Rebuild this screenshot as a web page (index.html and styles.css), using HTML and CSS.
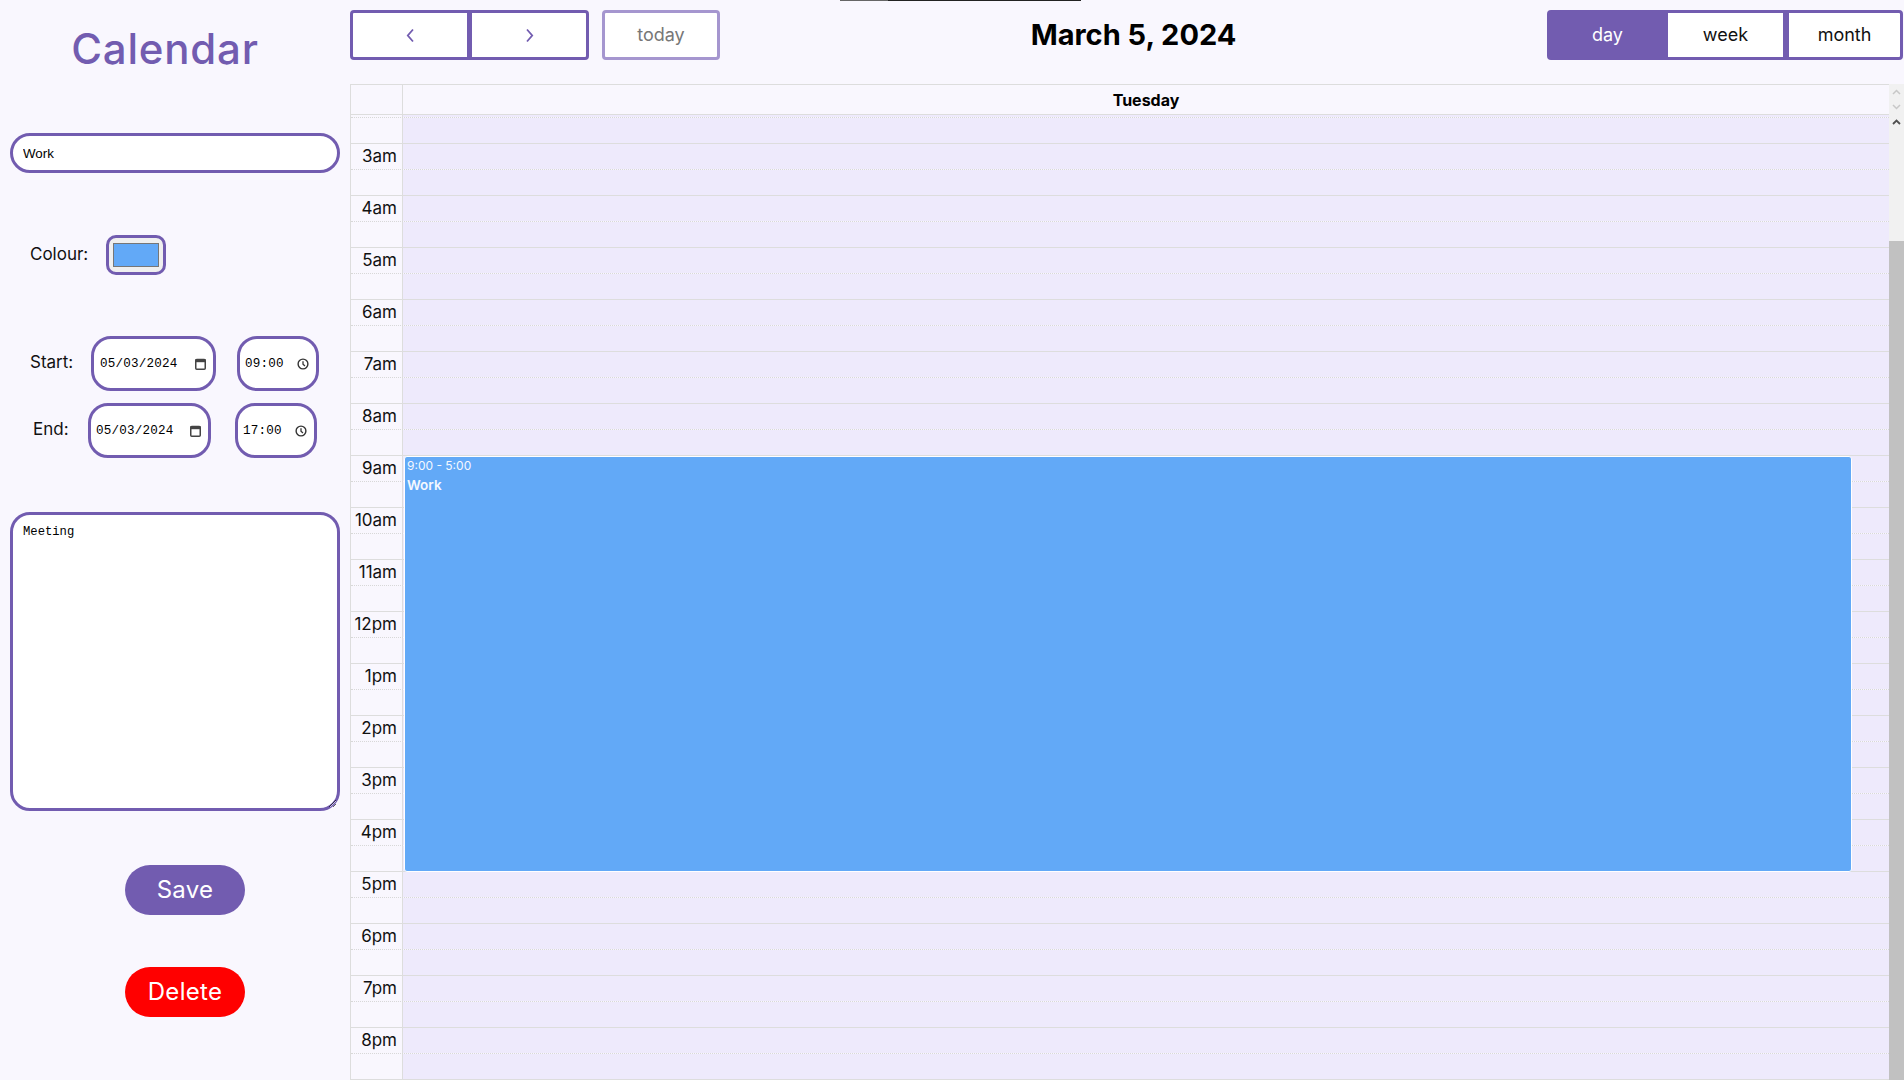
FILE: index.html
```html
<!DOCTYPE html>
<html lang="en">
<head>
<meta charset="utf-8">
<title>Calendar</title>
<link rel="stylesheet" href="styles.css">
</head>
<body>
<div class="topline"></div>
<div class="app">
  <aside class="sidebar">
    <h1 class="brand">Calendar</h1>
    <input class="name-input" type="text" value="Work">
    <div class="colour-row">
      <span class="label colour-label">Colour:</span>
      <div class="colour-box"><div class="swatch"></div></div>
    </div>
    <div class="dt-row start">
      <span class="label">Start:</span>
      <div class="field date"><span>05/03/2024</span>
        <svg class="ico" width="11" height="12" viewBox="0 0 11 12"><rect x="0.75" y="1.5" width="9.5" height="9.75" rx="1" fill="none" stroke="#444" stroke-width="1.5"/><rect x="0.5" y="1" width="10" height="3.2" fill="#444"/></svg>
      </div>
      <div class="field time"><span>09:00</span>
        <svg class="ico" width="12" height="12" viewBox="0 0 12 12"><circle cx="6" cy="6" r="4.9" fill="none" stroke="#333" stroke-width="1.4"/><path d="M6 3.2V6.2L8 8" fill="none" stroke="#333" stroke-width="1.3"/></svg>
      </div>
    </div>
    <div class="dt-row end">
      <span class="label">End:</span>
      <div class="field date"><span>05/03/2024</span>
        <svg class="ico" width="11" height="12" viewBox="0 0 11 12"><rect x="0.75" y="1.5" width="9.5" height="9.75" rx="1" fill="none" stroke="#444" stroke-width="1.5"/><rect x="0.5" y="1" width="10" height="3.2" fill="#444"/></svg>
      </div>
      <div class="field time"><span>17:00</span>
        <svg class="ico" width="12" height="12" viewBox="0 0 12 12"><circle cx="6" cy="6" r="4.9" fill="none" stroke="#333" stroke-width="1.4"/><path d="M6 3.2V6.2L8 8" fill="none" stroke="#333" stroke-width="1.3"/></svg>
      </div>
    </div>
    <textarea class="notes">Meeting</textarea>
    <button class="btn save">Save</button>
    <button class="btn delete">Delete</button>
  </aside>

  <main class="main">
    <div class="toolbar">
      <div class="tb-left">
        <div class="group">
          <button class="nav-btn prev"><svg width="9" height="15" viewBox="0 0 9 15"><path d="M7 1.5L1.8 7.5L7 13.5" fill="none" stroke="#725cb0" stroke-width="1.8"/></svg></button>
          <button class="nav-btn next"><svg width="9" height="15" viewBox="0 0 9 15"><path d="M2 1.5L7.2 7.5L2 13.5" fill="none" stroke="#725cb0" stroke-width="1.8"/></svg></button>
        </div>
        <button class="today">today</button>
      </div>
      <h2 class="title">March 5, 2024</h2>
      <div class="group">
        <button class="view day-btn">day</button>
        <button class="view week-btn">week</button>
        <button class="view month-btn">month</button>
      </div>
    </div>

    <div class="calendar">
      <div class="cal-main">
        <div class="cal-head">
          <div class="head-gutter"></div>
          <div class="head-day">Tuesday</div>
        </div>
        <div class="cal-body">
          <div class="rows">
            <div class="slot"><div class="g"></div><div class="d"></div></div>
            <div class="slot half"><div class="g"></div><div class="d"></div></div>
            <div class="slot"><div class="g">3am</div><div class="d"></div></div>
            <div class="slot half"><div class="g"></div><div class="d"></div></div>
            <div class="slot"><div class="g">4am</div><div class="d"></div></div>
            <div class="slot half"><div class="g"></div><div class="d"></div></div>
            <div class="slot"><div class="g">5am</div><div class="d"></div></div>
            <div class="slot half"><div class="g"></div><div class="d"></div></div>
            <div class="slot"><div class="g">6am</div><div class="d"></div></div>
            <div class="slot half"><div class="g"></div><div class="d"></div></div>
            <div class="slot"><div class="g">7am</div><div class="d"></div></div>
            <div class="slot half"><div class="g"></div><div class="d"></div></div>
            <div class="slot"><div class="g">8am</div><div class="d"></div></div>
            <div class="slot half"><div class="g"></div><div class="d"></div></div>
            <div class="slot"><div class="g">9am</div><div class="d"></div></div>
            <div class="slot half"><div class="g"></div><div class="d"></div></div>
            <div class="slot"><div class="g">10am</div><div class="d"></div></div>
            <div class="slot half"><div class="g"></div><div class="d"></div></div>
            <div class="slot"><div class="g">11am</div><div class="d"></div></div>
            <div class="slot half"><div class="g"></div><div class="d"></div></div>
            <div class="slot"><div class="g">12pm</div><div class="d"></div></div>
            <div class="slot half"><div class="g"></div><div class="d"></div></div>
            <div class="slot"><div class="g">1pm</div><div class="d"></div></div>
            <div class="slot half"><div class="g"></div><div class="d"></div></div>
            <div class="slot"><div class="g">2pm</div><div class="d"></div></div>
            <div class="slot half"><div class="g"></div><div class="d"></div></div>
            <div class="slot"><div class="g">3pm</div><div class="d"></div></div>
            <div class="slot half"><div class="g"></div><div class="d"></div></div>
            <div class="slot"><div class="g">4pm</div><div class="d"></div></div>
            <div class="slot half"><div class="g"></div><div class="d"></div></div>
            <div class="slot"><div class="g">5pm</div><div class="d"></div></div>
            <div class="slot half"><div class="g"></div><div class="d"></div></div>
            <div class="slot"><div class="g">6pm</div><div class="d"></div></div>
            <div class="slot half"><div class="g"></div><div class="d"></div></div>
            <div class="slot"><div class="g">7pm</div><div class="d"></div></div>
            <div class="slot half"><div class="g"></div><div class="d"></div></div>
            <div class="slot"><div class="g">8pm</div><div class="d"></div></div>
            <div class="slot half"><div class="g"></div><div class="d"></div></div>
            <div class="slot"><div class="g"></div><div class="d"></div></div>
            <div class="slot half"><div class="g"></div><div class="d"></div></div>
            <div class="event">
              <div class="ev-time">9:00 - 5:00</div>
              <div class="ev-title">Work</div>
            </div>
          </div>
        </div>
      </div>
      <div class="scrollbar">
        <div class="chevs">
          <svg width="9" height="6" viewBox="0 0 9 6"><path d="M1 5L4.5 1.5L8 5" fill="none" stroke="#c8c8c8" stroke-width="1.5"/></svg>
          <svg width="9" height="6" viewBox="0 0 9 6"><path d="M1 1L4.5 4.5L8 1" fill="none" stroke="#c8c8c8" stroke-width="1.5"/></svg>
          <svg width="9" height="6" viewBox="0 0 9 6"><path d="M1 5L4.5 1.5L8 5" fill="none" stroke="#505050" stroke-width="1.8"/></svg>
        </div>
        <div class="thumb"></div>
      </div>
    </div>
  </main>
</div>
</body>
</html>
```

FILE: styles.css
```css
* { box-sizing: border-box; }
html, body { margin: 0; height: 100%; }
body {
  background: #f9f7fe;
  font-family: Inter, "Open Sans", sans-serif;
  color: #111;
  overflow: hidden;
}
.topline {
  position: absolute;
  top: 0;
  left: 840px;
  width: 241px;
  height: 1px;
  background: linear-gradient(to right, #666 0, #666 48px, #222 48px);
}
.app { display: flex; height: 1080px; }

/* Sidebar */
.sidebar { width: 350px; flex: none; padding: 0 10px; }
.brand {
  margin: 24px 0 0;
  width: 310px;
  height: 50px;
  font-size: 42px;
  line-height: 50px;
  font-weight: 500;
  letter-spacing: 0.8px;
  color: #725cb0;
  text-align: center;
}
.name-input {
  display: block;
  margin-top: 59px;
  width: 330px;
  height: 40px;
  border: 3px solid #725cb0;
  border-radius: 20px;
  background: #fff;
  padding: 0 10px;
  font: 13.33px "Liberation Sans", Arial, sans-serif;
  color: #000;
  outline: none;
}
.label { font-size: 17px; color: #111; padding-bottom: 3px; }
.colour-row { display: flex; align-items: center; margin-top: 62px; height: 40px; }
.colour-label { margin-left: 20px; width: 76px; }
.colour-box {
  width: 60px;
  height: 40px;
  border: 3px solid #725cb0;
  border-radius: 10px;
  background: #efefef;
  display: flex;
  align-items: center;
  justify-content: center;
}
.swatch { width: 46px; height: 24px; background: #62a9f7; border: 1px solid #767676; }

.dt-row { display: flex; align-items: center; height: 55px; }
.start { margin-top: 61px; }
.end { margin-top: 12px; }
.start .label { margin-left: 20px; width: 61px; }
.end .label { margin-left: 23px; width: 55px; }
.field {
  height: 55px;
  border: 3px solid #725cb0;
  border-radius: 20px;
  background: #fff;
  display: flex;
  align-items: center;
  justify-content: space-between;
  font: 12.6px "Liberation Mono", "DejaVu Sans Mono", monospace;
  letter-spacing: 0.2px;
  color: #000;
  padding-top: 1px;
}
.date { width: 125px; padding-left: 6px; padding-right: 7px; }
.end .date { width: 123px; padding-left: 5px; }
.time { width: 82px; margin-left: 21px; padding-left: 5px; padding-right: 7px; }
.end .time { margin-left: 24px; }
.ico { flex: none; }

.notes {
  display: block;
  margin-top: 54px;
  width: 330px;
  height: 299px;
  border: 3px solid #725cb0;
  border-radius: 20px;
  background: #fff;
  padding: 10px;
  font: 12.2px "Liberation Mono", "DejaVu Sans Mono", monospace;
  color: #000;
  outline: none;
}
.btn {
  display: block;
  margin-left: 115px;
  width: 120px;
  height: 50px;
  border: none;
  border-radius: 25px;
  color: #fff;
  font: 400 24px Inter, "Open Sans", sans-serif;
  letter-spacing: 0.3px;
  padding: 0 0 2px;
}
.save { margin-top: 54px; background: #725cb0; }
.delete { margin-top: 52px; background: #ff0000; }

/* Main */
.main { flex: 1; min-width: 0; display: flex; flex-direction: column; }
.toolbar {
  display: flex;
  align-items: center;
  justify-content: space-between;
  height: 50px;
  margin-top: 10px;
  padding-right: 1px;
}
.tb-left { display: flex; align-items: center; }
.group { display: flex; }
button { cursor: pointer; }
.nav-btn {
  width: 120px;
  height: 50px;
  border: 3px solid #725cb0;
  background: #fff;
  display: flex;
  align-items: center;
  justify-content: center;
  padding: 0;
}
.prev { border-radius: 4px 0 0 4px; }
.next { margin-left: -1px; border-radius: 0 4px 4px 0; }
.today {
  margin-left: 13px;
  width: 118px;
  height: 50px;
  border: 3px solid #a596cf;
  border-radius: 4px;
  background: #fff;
  color: #777;
  font: 400 18px Inter, "Open Sans", sans-serif;
  padding: 0 0 2px;
}
.title { margin: 0 0 1px; font-size: 29px; font-weight: 700; color: #000; }
.view {
  height: 50px;
  border: 3px solid #725cb0;
  background: #fff;
  color: #111;
  font: 400 18px Inter, "Open Sans", sans-serif;
  padding: 0 0 2px;
}
.day-btn { width: 121px; background: #725cb0; color: #fff; border-radius: 4px 0 0 4px; }
.week-btn { width: 118px; border-left: 0; }
.month-btn { width: 117px; border-radius: 0 4px 4px 0; }

/* Calendar grid */
.calendar { margin-top: 24px; flex: 1; min-height: 0; display: flex; }
.cal-main { flex: 1; min-width: 0; display: flex; flex-direction: column; border-left: 1px solid #ddd; }
.cal-head { display: flex; flex: none; height: 31px; border-top: 1px solid #ddd; border-bottom: 1px solid #ddd; }
.head-gutter { width: 52px; border-right: 1px solid #ddd; }
.head-day { flex: 1; text-align: center; font-weight: 700; font-size: 16px; line-height: 30px; color: #000; }
.cal-body { flex: 1; min-height: 0; overflow: hidden; position: relative; }
.rows { margin-top: -24px; position: relative; }
.slot { display: flex; height: 26px; border-top: 1px solid #ddd; }
.slot.half { border-top: 1px dotted #d8d8d8; }
.g {
  width: 52px;
  flex: none;
  border-right: 1px solid #ddd;
  text-align: right;
  padding: 2px 5px 0 0;
  font-size: 17px;
  line-height: 20px;
  color: #111;
  white-space: nowrap;
}
.d { flex: 1; background: #eeeafc; }
.event {
  position: absolute;
  top: 365px;
  height: 416px;
  left: 53px;
  right: calc((100% - 52px) * 0.025);
  background: #62a9f7;
  border: 1px solid #fff;
  border-radius: 3px;
  padding: 1px 2px;
  color: #f4f8ff;
}
.ev-time { font-size: 12px; line-height: 15px; }
.ev-title { margin-top: 3px; font-size: 13.5px; line-height: 18px; font-weight: 600; }

.scrollbar {
  width: 15px;
  flex: none;
  background: #f1f1f1;
  display: flex;
  flex-direction: column;
}
.chevs { display: flex; flex-direction: column; align-items: center; padding-top: 5px; gap: 9px; }
.chevs svg { display: block; }
.thumb { margin-top: auto; height: 839px; background: #c1c1c1; }
```
